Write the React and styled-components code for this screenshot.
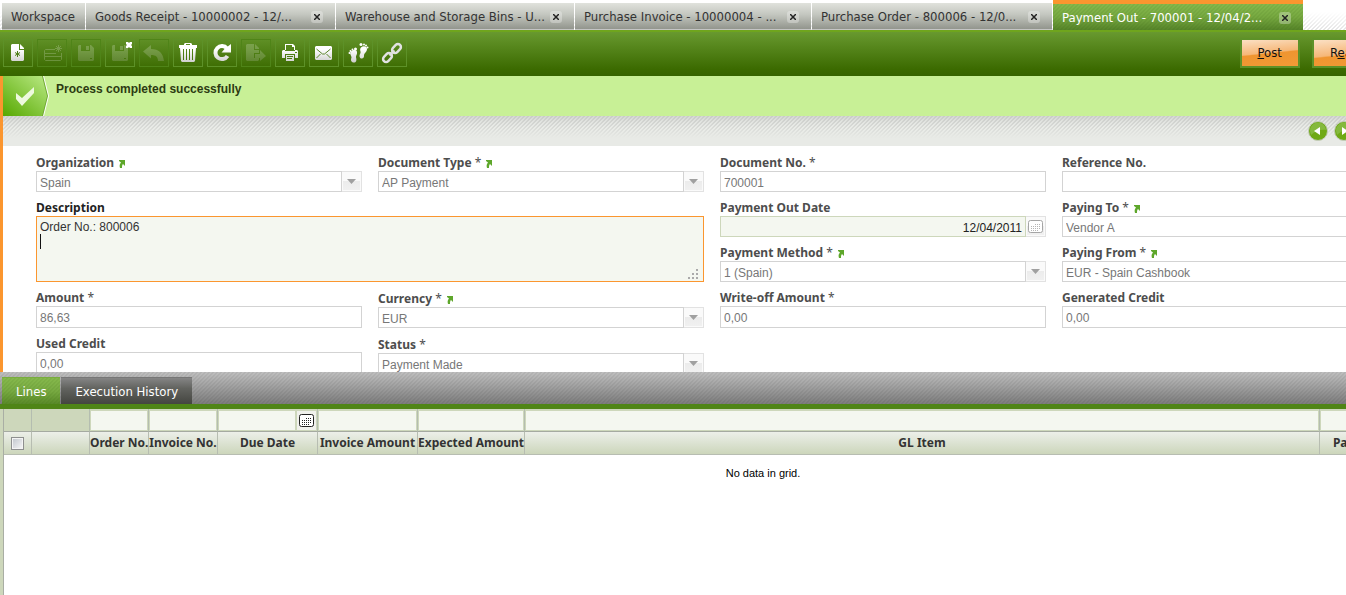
import React from "react";
import styled, { createGlobalStyle, css } from "styled-components";

const uiFont = `"DejaVu Sans Condensed", "Noto Sans", sans-serif`;
const labelFont = `"Noto Sans", "Open Sans", sans-serif`;
const fieldFont = `"Liberation Sans", Arial, sans-serif`;

const hatch = (color) =>
  `linear-gradient(135deg, ${color} 25%, transparent 25% 50%, ${color} 50% 75%, transparent 75%) 0 0 / 4px 4px`;

const GlobalStyle = createGlobalStyle`
  *, *::before, *::after {
    box-sizing: border-box;
  }
  body {
    margin: 0;
    background: #fff;
    overflow-x: hidden;
    font-family: ${uiFont};
  }
  button, input, select, textarea {
    margin: 0;
    border-radius: 0;
    font: inherit;
  }
`;

const Page = styled.div`
  display: flex;
  flex-direction: column;
  min-width: 1424px;
  min-height: 100vh;
`;

/* window tabs */

const TabBar = styled.nav`
  display: flex;
  align-items: flex-end;
  gap: 1px;
  height: 30px;
  padding-left: 2px;
  background: linear-gradient(#fff 40%, transparent), ${hatch("#e6e6e6")};
`;

const Tab = styled.div`
  display: flex;
  align-items: center;
  width: ${({ $width }) => $width}px;
  height: 27px;
  padding: 1px 9px 0;
  border-bottom: 1px solid #c4c4c4;
  background: linear-gradient(#e0e2dc, #c3c6bf 45%, #92958d);
  color: #333;
  ${({ $active }) =>
    $active &&
    css`
      height: 30px;
      border-top: 4px solid #fb962f;
      border-bottom: 0;
      background: ${hatch("rgba(50, 90, 10, 0.08)")},
        linear-gradient(#86b94d, #76a840 50%, #568429);
      color: #fff;
    `}
`;

const TabTitle = styled.button`
  flex: 1;
  padding: 0;
  border: 0;
  background: none;
  color: inherit;
  font-size: 13px;
  line-height: 18px;
  text-align: left;
  white-space: nowrap;
`;

const TabClose = styled.button`
  display: flex;
  align-items: center;
  justify-content: center;
  width: 12px;
  height: 12px;
  margin-right: 3px;
  padding: 0;
  border: 0;
  border-radius: 3px;
  background: rgba(255, 255, 255, 0.3);
  color: #222;
`;

/* toolbar */

const Toolbar = styled.div`
  display: flex;
  align-items: center;
  justify-content: space-between;
  height: 46px;
  padding: 0 14px 2px 3px;
  border-top: 2px solid #6fa51d;
  background: linear-gradient(#68992f, #3b6a00 85%, #376400);
`;

const ToolGroup = styled.div`
  display: flex;
  gap: ${({ $gap }) => $gap}px;
`;

const ToolButton = styled.button`
  width: 30px;
  height: 28px;
  padding: 0;
  border: 1px solid ${({ disabled }) => (disabled ? "#4f8418" : "#5d9128")};
  background: none;

  svg {
    display: block;
    margin: -1px;
    opacity: ${({ disabled }) => (disabled ? 0.2 : 1)};
  }
`;

const ActionButton = styled.button`
  height: 30px;
  padding: 0 16px;
  border: 2px solid #5d9128;
  background: linear-gradient(174deg, #fbe0c4, #f6b778 48%, #ef9530 52%, #f19a36);
  color: #111;
  font-size: 13px;
  line-height: 18px;
`;

/* record area */

const Record = styled.section`
  border-left: 3px solid #fb962f;
`;

const Message = styled.div`
  display: flex;
  height: 40px;
  background: #c8f096;
  color: #2c3b12;
  font-family: ${fieldFont};
  font-size: 12px;
  font-weight: bold;
  line-height: 15px;
`;

const MessageText = styled.p`
  margin: 0;
  padding: 6px 7px;
`;

const StatusBar = styled.div`
  display: flex;
  align-items: center;
  justify-content: flex-end;
  gap: 6px;
  height: 30px;
  padding-right: 70px;
  background: linear-gradient(rgba(232, 234, 230, 0), #e8eae6 75%), ${hatch("#c9cbc8")},
    linear-gradient(#d4d6d3, #eceeea 40%);
`;

const RoundButton = styled.button`
  width: 20px;
  height: 20px;
  padding: 0;
  border: 0;
  background: none;

  svg {
    display: block;
  }
`;

const Form = styled.form`
  display: grid;
  grid-template-columns: repeat(4, minmax(0, 1fr));
  align-content: start;
  align-items: end;
  gap: 9px 16px;
  height: 226px;
  padding: 10px 36px 0 33px;
  overflow: hidden;
  background: #fff;
`;

const FieldBox = styled.div`
  display: flex;
  flex-direction: column;
  ${({ $large }) =>
    $large &&
    css`
      grid-column: span 2;
      grid-row: span 2;
      align-self: stretch;
    `}
`;

const LabelRow = styled.div`
  display: flex;
  align-items: flex-start;
  gap: 5px;
  height: 15px;
  color: ${({ $focused }) => ($focused ? "#222" : "#4d4d4d")};
  font-family: ${labelFont};
  font-size: 12px;
  font-weight: bold;
  line-height: 13px;
  white-space: nowrap;

  a {
    display: flex;
    padding-top: 4px;
  }
`;

const Required = styled.span`
  font-weight: normal;
`;

const Control = styled.div`
  position: relative;
  display: flex;
  flex: 1;
`;

const controlText = css`
  flex: 1;
  min-width: 0;
  border: 1px solid #d3d3d3;
  outline: 0;
  background: #fff;
  color: #777;
  font-family: ${fieldFont};
  font-size: 12px;
  line-height: 15px;
`;

const TextInput = styled.input`
  ${controlText}
  height: ${({ $numeric }) => ($numeric ? 22 : 21)}px;
  padding: 2px 3px 0;
`;

const DateInput = styled(TextInput)`
  border-color: #cdd7bb;
  background: #f4f7f0;
  color: #222;
  text-align: right;
`;

const Select = styled.select`
  ${controlText}
  appearance: none;
  height: 21px;
  padding: 3px 3px 0;
  opacity: 1;
`;

const TextArea = styled.textarea`
  ${controlText}
  padding: 3px;
  border-color: #fb962f;
  background: #f4f7f0;
  color: #333;
  resize: none;
`;

const Caret = styled.span`
  position: absolute;
  top: 18px;
  left: 4px;
  width: 1px;
  height: 15px;
  background: #111;
`;

const Grip = styled.svg`
  position: absolute;
  right: 5px;
  bottom: 3px;
`;

const Picker = styled.span`
  display: flex;
  align-items: center;
  justify-content: center;
  width: 20px;
  height: 21px;
  border: 1px solid #e2e2e2;
  border-left: 0;
  background: linear-gradient(#fafafa 45%, #ebebeb 45%, #f1f1f1);
  box-shadow: inset 0 0 0 1px #fafafa;
`;

const PickerButton = styled(Picker).attrs({ as: "button", type: "button" })`
  padding: 0;
`;

/* child tabs */

const ChildTabs = styled.nav`
  display: flex;
  align-items: flex-end;
  gap: 1px;
  height: 37px;
  padding-left: 2px;
  border-bottom: 5px solid #4f8516;
  background: ${hatch("rgba(0, 0, 0, 0.05)")}, linear-gradient(#bfbfbf, #7c7c7c);
`;

const ChildTab = styled.button`
  height: 27px;
  padding: 2px 14px 0;
  border: 0;
  border-top: 1px solid ${({ $active }) => ($active ? "#79ad3e" : "#777")};
  background: ${({ $active }) =>
    $active
      ? `${hatch("rgba(50, 90, 10, 0.08)")}, linear-gradient(#86b94d, #78aa42 50%, #598a28)`
      : "linear-gradient(#858585, #62635f 40%, #444540)"};
  color: #fff;
  font-size: 13px;
  line-height: 18px;
  white-space: nowrap;
`;

/* grid */

const GridPane = styled.section`
  flex: 1;
  padding-left: 1px;
  border-left: 3px solid #cdd7bb;
  box-shadow: inset 1px 0 #a9aea4;
`;

const Grid = styled.table`
  width: 100%;
  border-spacing: 0;
  table-layout: fixed;
`;

const FilterCell = styled.td`
  height: 23px;
  padding: ${({ $blank }) => ($blank ? "0" : "1px 0 0")};
  border-right: 1px solid #b4bdb0;
  border-bottom: 1px solid #a5aaa1;
  background: #cdd7bb;
`;

const FilterRow = styled.div`
  display: flex;
`;

const FilterInput = styled.input`
  flex: 1;
  width: 100%;
  min-width: 0;
  height: 21px;
  padding: 0 3px;
  border: 1px solid #cdd7bb;
  background: #f4f7f0;
  font-family: ${fieldFont};
  font-size: 12px;
`;

const FilterPicker = styled.button`
  display: flex;
  align-items: center;
  justify-content: center;
  width: 21px;
  height: 21px;
  padding: 0;
  border: 1px solid #cdd7bb;
  background: #f0f1ec;
`;

const HeadCell = styled.th`
  height: 23px;
  padding: 0 0 2px;
  border-right: 1px solid #b7bdb1;
  border-bottom: 1px solid #b7bdb1;
  background: linear-gradient(#ecefe9, #ccd6bb);
  color: #333;
  font-family: ${labelFont};
  font-size: 12px;
  line-height: 15px;
  text-align: center;
  white-space: nowrap;
`;

const Checkbox = styled.input`
  display: block;
  width: 13px;
  height: 13px;
  margin: 2px 0 0 7px;
  appearance: none;
  border: 1px solid #8e8f8f;
  background: linear-gradient(135deg, #c0c5cc, #f8f8f8);
  box-shadow: inset 0 0 0 1px #f4f4f4;
`;

const EmptyCell = styled.td`
  padding: 11px 0 0 98px;
  color: #000;
  font-family: ${fieldFont};
  font-size: 11px;
  line-height: 15px;
  text-align: center;
`;

/* drawings */

const ToolSvg = ({ children }) => (
  <svg width="30" height="28" viewBox="0 0 30 28" fill="none" aria-hidden="true">
    <defs>
      <linearGradient id="metal" gradientUnits="userSpaceOnUse" x1="0" y1="5" x2="0" y2="23">
        <stop offset="0.3" stopColor="#fff" />
        <stop offset="1" stopColor="#cfcfcf" />
      </linearGradient>
    </defs>
    {children}
  </svg>
);

const fill = "url(#metal)";

const Floppy = () => (
  <path
    fill={fill}
    fillRule="evenodd"
    d="M8 6h12l3 3v12l-1 1H8l-1-1V7zM10 6v6h9V6zM15 7h3v4h-3zM19 19v1h2v-1z"
  />
);

const icons = {
  newDoc: (
    <>
      <path fill={fill} d="M9 5h7v6h5v10l-1 1H9l-1-1V6z" />
      <path fill={fill} d="M17 5l4 4v1h-4z" />
      <path stroke="#4b7c17" d="M14.5 12v6M12 13.5l5 3M12 16.5l5-3" />
    </>
  ),
  newRow: (
    <>
      <path stroke="#fff" d="M18 10.5H8.5l-1 1v9l1 1h15l1-1V14M8 14.5h11M8 17.5h16" />
      <path stroke="#fff" d="M21.5 6v7M18 9.5h7M19 7l5 5M24 7l-5 5" />
    </>
  ),
  save: <Floppy />,
  saveClose: (
    <>
      <g opacity="0.2"><Floppy /></g>
      <path fill="#fff" d="M21 3h2l1 1 1-1h2v2l-1 1 1 1v2h-2l-1-1-1 1h-2V7l1-1-1-1z" />
    </>
  ),
  undo: <path fill={fill} d="M4 12.5L12 6v4c8 0 12 4 13 12h-6c0-4-2-6-7-6v3.5z" />,
  trash: (
    <>
      <path fill={fill} d="M11 5l1-1h6l1 1v1h5v3H6V6h5zM13 5v1h4V5z" fillRule="evenodd" />
      <path fill={fill} fillRule="evenodd" d="M7 9h16l-1 13-1 1H9l-1-1zM10 10v11h1V10zM13 10v11h1V10zM16 10v11h1V10zM19 10v11h1V10z" />
    </>
  ),
  refresh: (
    <>
      <path stroke={fill} strokeWidth="4" d="M20.5 17a6.5 6.5 0 1 1-.5-7.5" />
      <path fill={fill} d="M24 5v8.5h-9.5L17.5 10z" />
    </>
  ),
  exportDoc: (
    <>
      <path fill={fill} d="M6 5h7v6h5v3h-5v5h5v2l-1 1H6l-1-1V6zM14 5l4 4v1h-4z" />
      <path fill={fill} d="M14 15h5v-4l6 6-6 5v-3h-5z" />
    </>
  ),
  print: (
    <>
      <path fill={fill} fillRule="evenodd" d="M10 5h8l2 2v4H10zM11 6v5h8V8h-2V6z" />
      <path fill={fill} fillRule="evenodd" d="M8 11h2v1h10v-1h2l1 1v7h-3v-4H10v4H7v-7zM20 13v1h2v-1z" />
      <path fill={fill} fillRule="evenodd" d="M11 16h8v6h-8zM12 17v1h6v-1zM12 19v1h5v-1z" />
    </>
  ),
  mail: (
    <>
      <path fill={fill} d="M7 7h15l1 1v12l-1 1H7l-1-1V8z" />
      <path stroke="#5a852c" d="M7.5 10l6 5h2l6-5M7.5 19l4-4M21.5 19l-4-4" />
    </>
  ),
  feet: (
    <>
      <path fill={fill} d="M8 12.5c2-2 5.500-2 6 .5.5 2.500-1.500 3.500-1 5.500 1 3 0 5-2 5-3 0-3.500-2.500-2.500-5 0-2-2.500-4-.5-6z" />
      <path fill={fill} d="M18 8.500c2-2 6-1.500 6 1.500 0 3-3 4-3 6.500.5 4-4.500 4-4.500.5 0-2 1.500-2.500 1-4.500-.5-1.500-.5-3 .5-4z" />
      <g fill="#fff">
        <circle cx="12.500" cy="10" r="1.500" />
        <circle cx="9.500" cy="10.500" r="1" />
        <circle cx="7.500" cy="12" r="1" />
        <circle cx="6.500" cy="14" r="1" />
        <circle cx="18" cy="5.500" r="1.500" />
        <circle cx="21" cy="5.500" r="1" />
        <circle cx="23" cy="6.500" r="1" />
        <circle cx="24.500" cy="8.500" r="1" />
      </g>
    </>
  ),
  link: (
    <g stroke="#e2e2e2" strokeWidth="2.5">
      <rect x="-5" y="-3" width="10" height="6" rx="3" transform="translate(19.5 9.5) rotate(-45)" />
      <rect x="-5" y="-3" width="10" height="6" rx="3" transform="translate(10.5 18.5) rotate(-45)" />
      <path strokeWidth="2" d="M12.5 16.5l5-5" />
    </g>
  ),
};

const LinkArrow = () => (
  <svg width="6" height="8" viewBox="0 0 6 8" aria-hidden="true">
    <path fill="#5ea72b" d="M0 0h6v6L5 5 4 4C3 5 3 6 3 8H1C0 5 1 4 2 2.5L0 1z" />
  </svg>
);

const Calendar = ({ color, dots }) => (
  <svg width="15" height="14" viewBox="0 0 15 14" aria-hidden="true">
    <rect x="0.5" y="0.5" width="14" height="12" rx="2" fill="#fff" stroke={color} />
    <path stroke={dots} strokeDasharray="1 1" d="M7 4.5h6M3 6.5h10M3 8.5h10M3 10.5h8" />
  </svg>
);

const tabs = [
  { title: "Workspace", width: 83 },
  { title: "Goods Receipt - 10000002 - 12/...", width: 249, closable: true },
  { title: "Warehouse and Storage Bins - U...", width: 238, closable: true },
  { title: "Purchase Invoice - 10000004 - ...", width: 236, closable: true },
  { title: "Purchase Order - 800006 - 12/0...", width: 240, closable: true },
  { title: "Payment Out - 700001 - 12/04/2...", width: 250, closable: true, active: true },
];

const tools = [
  { icon: "newDoc", label: "New" },
  { icon: "newRow", label: "New in grid", disabled: true },
  { icon: "save", label: "Save", disabled: true },
  { icon: "saveClose", label: "Save and close" },
  { icon: "undo", label: "Undo", disabled: true },
  { icon: "trash", label: "Delete" },
  { icon: "refresh", label: "Refresh" },
  { icon: "exportDoc", label: "Export", disabled: true },
  { icon: "print", label: "Print" },
  { icon: "mail", label: "Email" },
  { icon: "feet", label: "Audit trail" },
  { icon: "link", label: "Direct link" },
];

const fields = [
  { id: "organization", label: "Organization", link: true, type: "select", value: "Spain" },
  { id: "documentType", label: "Document Type", required: true, link: true, type: "select", value: "AP Payment" },
  { id: "documentNo", label: "Document No.", required: true, value: "700001" },
  { id: "referenceNo", label: "Reference No.", value: "" },
  { id: "description", label: "Description", type: "textarea", value: "Order No.: 800006\n" },
  { id: "paymentDate", label: "Payment Out Date", type: "date", value: "12/04/2011" },
  { id: "payingTo", label: "Paying To", required: true, link: true, value: "Vendor A" },
  { id: "paymentMethod", label: "Payment Method", required: true, link: true, type: "select", value: "1 (Spain)" },
  { id: "payingFrom", label: "Paying From", required: true, link: true, type: "select", value: "EUR - Spain Cashbook" },
  { id: "amount", label: "Amount", required: true, type: "number", value: "86,63" },
  { id: "currency", label: "Currency", required: true, link: true, type: "select", value: "EUR" },
  { id: "writeOff", label: "Write-off Amount", required: true, type: "number", value: "0,00" },
  { id: "generatedCredit", label: "Generated Credit", type: "number", value: "0,00" },
  { id: "usedCredit", label: "Used Credit", type: "number", value: "0,00" },
  { id: "status", label: "Status", required: true, type: "select", value: "Payment Made" },
];

const columns = [
  { title: "Order No.", width: 59 },
  { title: "Invoice No.", width: 69 },
  { title: "Due Date", width: 100, date: true },
  { title: "Invoice Amount", width: 100 },
  { title: "Expected Amount", width: 107 },
  { title: "GL Item" },
  { title: "Paid Amount", width: 104 },
];

function FieldControl({ id, type, value }) {
  if (type === "select") {
    return (
      <>
        <Select id={id} defaultValue={value}>
          <option>{value}</option>
        </Select>
        <Picker>
          <svg width="9" height="5" viewBox="0 0 9 5" aria-hidden="true">
            <path fill="#a0a0a0" d="M0 0h9L4.5 5z" />
          </svg>
        </Picker>
      </>
    );
  }
  if (type === "textarea") {
    return (
      <>
        <TextArea id={id} defaultValue={value} />
        <Caret />
        <Grip width="11" height="11" viewBox="0 0 11 11" aria-hidden="true">
          <path fill="#aaa" d="M8 1h2v2H8zM8 5h2v2H8zM4 5h2v2H4zM8 9h2v2H8zM4 9h2v2H4zM0 9h2v2H0z" />
        </Grip>
      </>
    );
  }
  if (type === "date") {
    return (
      <>
        <DateInput id={id} defaultValue={value} />
        <PickerButton aria-label="Pick a date">
          <Calendar color="#a5a5a5" dots="#b5b5b5" />
        </PickerButton>
      </>
    );
  }
  return <TextInput id={id} defaultValue={value} $numeric={type === "number"} />;
}

function Field(props) {
  const { id, label, required, link, type } = props;
  const large = type === "textarea";
  return (
    <FieldBox $large={large}>
      <LabelRow $focused={large}>
        <label htmlFor={id}>
          {label}
          {required && <Required> *</Required>}
        </label>
        {link && (
          <a href="#record" aria-label={`Open ${label}`}>
            <LinkArrow />
          </a>
        )}
      </LabelRow>
      <Control>
        <FieldControl {...props} />
      </Control>
    </FieldBox>
  );
}

const RoundArrow = ({ d }) => (
  <svg width="20" height="20" viewBox="0 0 20 20" aria-hidden="true">
    <circle cx="10" cy="10" r="9.5" fill="#6fa915" stroke="#c5ccbc" />
    <path fill="#8fc050" d="M2 10a8 8 0 0 1 16-1C13 8 7 10 3 14z" opacity="0.7" />
    <path fill="#fff" d={d} />
  </svg>
);

export default function App() {
  return (
    <>
      <GlobalStyle />
      <Page>
        <TabBar>
          {tabs.map(({ title, width, closable, active }) => (
            <Tab key={title} $width={width} $active={active}>
              <TabTitle>{title}</TabTitle>
              {closable && (
                <TabClose aria-label="Close tab">
                  <svg width="6" height="6" viewBox="0 0 6 6" aria-hidden="true">
                    <path stroke="currentColor" strokeWidth="1.5" d="M0 0l6 6M6 0L0 6" />
                  </svg>
                </TabClose>
              )}
            </Tab>
          ))}
        </TabBar>

        <Toolbar>
          <ToolGroup $gap={4}>
            {tools.map(({ icon, label, disabled }) => (
              <ToolButton key={icon} aria-label={label} disabled={disabled}>
                <ToolSvg>{icons[icon]}</ToolSvg>
              </ToolButton>
            ))}
          </ToolGroup>
          <ToolGroup $gap={12}>
            <ActionButton><u>P</u>ost</ActionButton>
            <ActionButton>R<u>e</u>activate</ActionButton>
          </ToolGroup>
        </Toolbar>

        <Record>
          <Message role="status">
            <svg width="46" height="40" viewBox="0 0 46 40" aria-hidden="true">
              <defs>
                <linearGradient id="done" x1="0" y1="1" x2="0.9" y2="0">
                  <stop offset="0" stopColor="#56a800" />
                  <stop offset="1" stopColor="#b5e67e" />
                </linearGradient>
              </defs>
              <path fill="#fff" d="M0 0h41l5 20-5 20H0z" />
              <path fill="#6fa832" d="M0 0h40l5 20-5 20H0z" />
              <path fill="url(#done)" d="M0 0h39l5 20-5 20H0z" />
              <path fill="#edf9de" d="M13 17l6 5L31 11v6L19 30l-6-7z" />
            </svg>
            <MessageText>Process completed successfully</MessageText>
          </Message>
          <StatusBar>
            <RoundButton aria-label="Previous record">
              <RoundArrow d="M6 10l6-4v8z" />
            </RoundButton>
            <RoundButton aria-label="Next record">
              <RoundArrow d="M14 10L8 6v8z" />
            </RoundButton>
          </StatusBar>
          <Form>
            {fields.map((field) => (
              <Field key={field.id} {...field} />
            ))}
          </Form>
        </Record>

        <ChildTabs>
          <ChildTab $active>Lines</ChildTab>
          <ChildTab>Execution History</ChildTab>
        </ChildTabs>

        <GridPane>
          <Grid>
            <colgroup>
              <col width="28" />
              <col width="58" />
              {columns.map(({ title, width }) => (
                <col key={title} width={width} />
              ))}
            </colgroup>
            <thead>
              <tr>
                <FilterCell $blank />
                <FilterCell $blank />
                {columns.map(({ title, date }) => (
                  <FilterCell key={title}>
                    <FilterRow>
                      <FilterInput aria-label={`Filter ${title}`} />
                      {date && (
                        <FilterPicker aria-label="Filter by date">
                          <Calendar color="#222" dots="#222" />
                        </FilterPicker>
                      )}
                    </FilterRow>
                  </FilterCell>
                ))}
              </tr>
              <tr>
                <HeadCell>
                  <Checkbox type="checkbox" aria-label="Select all" />
                </HeadCell>
                <HeadCell />
                {columns.map(({ title }) => (
                  <HeadCell key={title}>{title}</HeadCell>
                ))}
              </tr>
            </thead>
            <tbody>
              <tr>
                <EmptyCell colSpan={9}>No data in grid.</EmptyCell>
              </tr>
            </tbody>
          </Grid>
        </GridPane>
      </Page>
    </>
  );
}
